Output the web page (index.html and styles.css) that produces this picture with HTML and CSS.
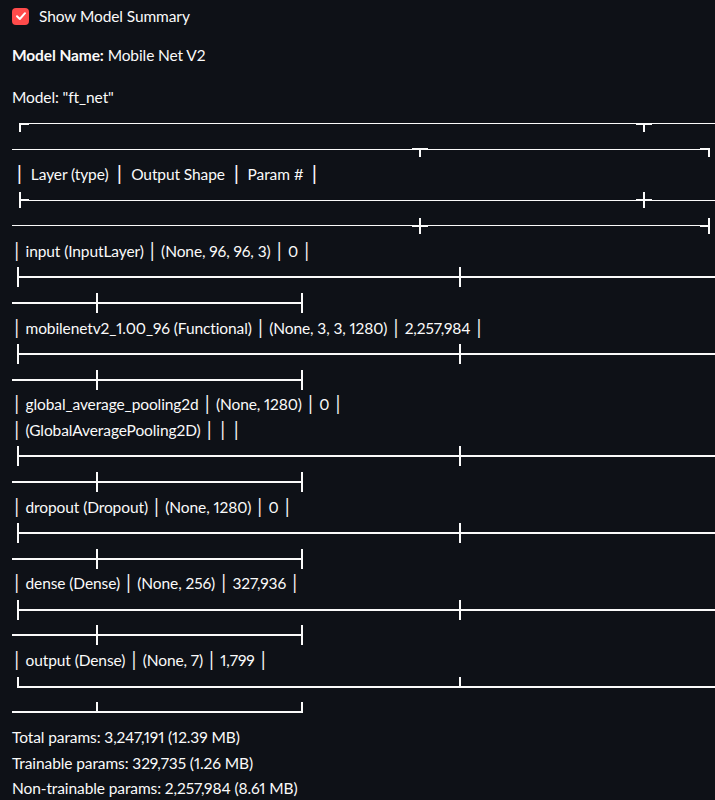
FILE: index.html
```html
<!DOCTYPE html>
<html lang="en">
<head>
<meta charset="utf-8">
<title>Model Summary</title>
<link rel="stylesheet" href="styles.css">
</head>
<body>
<div class="app">
  <label class="checkbox">
    <span class="box"><svg width="12" height="12" viewBox="0 0 12 12"><polyline points="2,6.2 4.8,9 10,3.2" fill="none" stroke="#ffffff" stroke-width="2" stroke-linecap="round" stroke-linejoin="round"/></svg></span>
    <span class="label">Show Model Summary</span>
  </label>
  <p class="name"><strong>Model Name:</strong> Mobile Net V2</p>
  <div class="summary">
    <div class="ln">Model: "ft_net"</div>

    <div class="rule heavy in7"><span class="j j-tl"></span><span class="seg w607"></span><span class="j j-t"></span><span class="seg grow"></span></div>
    <div class="rule heavy"><span class="seg w400"></span><span class="j j-t"></span><span class="seg w272"></span><span class="j j-tr"></span></div>
    <div class="ln"><span class="vh">┃</span> Layer (type) <span class="vh">┃</span> Output Shape <span class="vh">┃</span> Param # <span class="vh">┃</span></div>
    <div class="rule heavy in7"><span class="j j-lt"></span><span class="seg w607"></span><span class="j j-x"></span><span class="seg grow"></span></div>
    <div class="rule heavy"><span class="seg w400"></span><span class="j j-x"></span><span class="seg w272"></span><span class="j j-rt"></span></div>

    <div class="ln"><span class="v">│</span> input (InputLayer) <span class="v">│</span> (None, 96, 96, 3) <span class="v">│</span> 0 <span class="v">│</span></div>
    <div class="rule light in5"><span class="j j-full"></span><span class="seg w440"></span><span class="j j-full"></span><span class="seg grow"></span></div>
    <div class="rule light"><span class="seg w84"></span><span class="j j-full"></span><span class="seg w203"></span><span class="j j-full"></span></div>

    <div class="ln"><span class="v">│</span> mobilenetv2_1.00_96 (Functional) <span class="v">│</span> (None, 3, 3, 1280) <span class="v">│</span> 2,257,984 <span class="v">│</span></div>
    <div class="rule light in5"><span class="j j-full"></span><span class="seg w440"></span><span class="j j-full"></span><span class="seg grow"></span></div>
    <div class="rule light"><span class="seg w84"></span><span class="j j-full"></span><span class="seg w203"></span><span class="j j-full"></span></div>

    <div class="ln"><span class="v">│</span> global_average_pooling2d <span class="v">│</span> (None, 1280) <span class="v">│</span> 0 <span class="v">│</span></div>
    <div class="ln"><span class="v">│</span> (GlobalAveragePooling2D) <span class="v">│</span> <span class="v">│</span> <span class="v">│</span></div>
    <div class="rule light in5"><span class="j j-full"></span><span class="seg w440"></span><span class="j j-full"></span><span class="seg grow"></span></div>
    <div class="rule light"><span class="seg w84"></span><span class="j j-full"></span><span class="seg w203"></span><span class="j j-full"></span></div>

    <div class="ln"><span class="v">│</span> dropout (Dropout) <span class="v">│</span> (None, 1280) <span class="v">│</span> 0 <span class="v">│</span></div>
    <div class="rule light in5"><span class="j j-full"></span><span class="seg w440"></span><span class="j j-full"></span><span class="seg grow"></span></div>
    <div class="rule light"><span class="seg w84"></span><span class="j j-full"></span><span class="seg w203"></span><span class="j j-full"></span></div>

    <div class="ln"><span class="v">│</span> dense (Dense) <span class="v">│</span> (None, 256) <span class="v">│</span> 327,936 <span class="v">│</span></div>
    <div class="rule light in5"><span class="j j-full"></span><span class="seg w440"></span><span class="j j-full"></span><span class="seg grow"></span></div>
    <div class="rule light"><span class="seg w84"></span><span class="j j-full"></span><span class="seg w203"></span><span class="j j-full"></span></div>

    <div class="ln"><span class="v">│</span> output (Dense) <span class="v">│</span> (None, 7) <span class="v">│</span> 1,799 <span class="v">│</span></div>
    <div class="rule light in5"><span class="j j-up"></span><span class="seg w440"></span><span class="j j-up"></span><span class="seg grow"></span></div>
    <div class="rule light"><span class="seg w84"></span><span class="j j-up"></span><span class="seg w203"></span><span class="j j-up"></span></div>

    <div class="ln">Total params: 3,247,191 (12.39 MB)</div>
    <div class="ln">Trainable params: 329,735 (1.26 MB)</div>
    <div class="ln">Non-trainable params: 2,257,984 (8.61 MB)</div>
  </div>
</div>
</body>
</html>
```

FILE: styles.css
```css
* { box-sizing: border-box; }

html, body {
  margin: 0;
  background: #0e1117;
}

body {
  color: #fafafa;
  font-family: Lato, "Noto Sans", sans-serif;
  font-size: 15.5px;
  letter-spacing: -0.1px;
  font-variant-numeric: proportional-nums;
  overflow: hidden;
}

.app {
  padding: 4px 0 0 12px;
}

.checkbox {
  display: flex;
  align-items: center;
  gap: 10px;
  height: 24px;
}

.box {
  width: 17px;
  height: 17px;
  border-radius: 4px;
  background: #ff4b4b;
  display: flex;
  align-items: center;
  justify-content: center;
  flex: none;
}

.label {
  line-height: 24px;
}

.name {
  margin: 15.2px 0 16.4px;
  line-height: 25.6px;
  height: 25.6px;
}

.name strong { font-weight: 700; }

.summary {
  line-height: 25.6px;
}

.ln {
  height: 25.6px;
  white-space: nowrap;
}

.v, .vh {
  font-family: "DejaVu Sans", sans-serif;
  font-size: 16px;
  letter-spacing: 0;
}

.vh {
  display: inline-block;
  width: 15px;
  text-align: center;
  transform: scaleX(0.6);
}

/* box-drawing rules */
.rule {
  display: flex;
  align-items: center;
  height: 25.6px;
}

.in7 { padding-left: 7px; }
.in5 { padding-left: 5px; }

.seg {
  flex: none;
  height: 1px;
  background: #fafafa;
}

.light .seg { height: 2px; }

.seg.grow { flex: 1 1 auto; }
.w607 { width: 607px; }
.w400 { width: 400px; }
.w272 { width: 272px; }
.w440 { width: 440px; }
.w84 { width: 84px; }
.w203 { width: 203px; }

.j {
  flex: none;
  background-repeat: no-repeat;
  background-image: linear-gradient(#fafafa, #fafafa), linear-gradient(#fafafa, #fafafa);
}

.heavy .j { height: 16px; }
.light .j { height: 20px; width: 2px; }

/* ┳ */
.j-t {
  width: 16px;
  background-size: 100% 2px, 2px 50%;
  background-position: center center, center bottom;
}

/* ╇ */
.j-x {
  width: 16px;
  background-size: 100% 2px, 2px 100%;
  background-position: center center, center center;
}

/* ┏ */
.j-tl {
  width: 10px;
  background-size: 100% 2px, 2px 50%;
  background-position: center center, left bottom;
}

/* ┓ */
.j-tr {
  width: 10px;
  background-size: 100% 2px, 2px 50%;
  background-position: center center, right bottom;
}

/* ┡ */
.j-lt {
  width: 10px;
  background-size: 100% 2px, 2px 100%;
  background-position: center center, left center;
}

/* ┩ */
.j-rt {
  width: 10px;
  background-size: 100% 2px, 2px 100%;
  background-position: center center, right center;
}

/* ├ ┼ ┤ */
.j-full {
  background-size: 100% 2px, 2px 100%;
  background-position: center center, center center;
}

/* └ ┴ ┘ */
.j-up {
  background-size: 100% 2px, 2px 50%;
  background-position: center center, center top;
}
```
